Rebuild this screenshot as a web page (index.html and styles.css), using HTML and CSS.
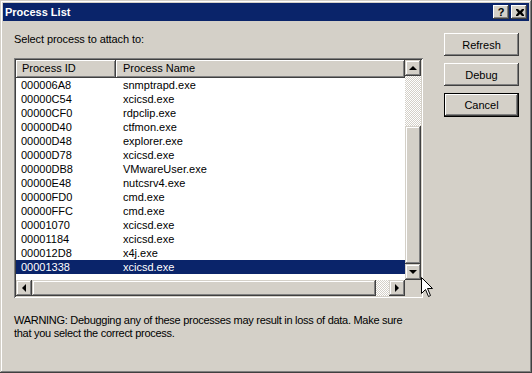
FILE: index.html
```html
<!DOCTYPE html>
<html lang="en">
<head>
  <meta charset="UTF-8" />
  <title>Process List</title>
  <link rel="stylesheet" href="styles.css">
</head>
<body>
  <div class="window">
    <div class="titlebar">
      <span class="title">Process List</span>
      <div class="title-btns">
        <button class="tbtn help">?</button>
        <button class="tbtn close">
          <svg width="8" height="7" viewBox="0 0 8 7">
            <path d="M0 0h2l2 2 2-2h2v1l-2 2.5 2 2.5v1h-2l-2-2-2 2h-2v-1l2-2.5-2-2.5z" fill="#000"/>
          </svg>
        </button>
      </div>
    </div>

    <div class="client">
      <div class="main">
        <div class="prompt">Select process to attach to:</div>

        <div class="listview">
          <div class="lv-content">
            <div class="lv-header">
              <div class="col-head col-id">Process ID</div>
              <div class="col-head col-name">Process Name</div>
            </div>
            <div class="lv-rows" id="rows"></div>
          </div>
          <div class="vscroll">
            <div class="sbtn"><span class="arrow up"></span></div>
            <div class="track" style="height: 50px"></div>
            <div class="thumb" style="height: 138px"></div>
            <div class="sbtn"><span class="arrow down"></span></div>
          </div>
          <div class="hscroll">
            <div class="sbtn"><span class="arrow left"></span></div>
            <div class="thumb" style="width: 344px"></div>
            <div class="track"></div>
            <div class="sbtn"><span class="arrow right"></span></div>
          </div>
          <div class="corner"></div>
        </div>

        <p class="warning">WARNING: Debugging any of these processes may result in loss of data. Make sure<br>that you select the correct process.</p>
      </div>

      <div class="buttons">
        <button class="btn">Refresh</button>
        <button class="btn">Debug</button>
        <button class="btn default">Cancel</button>
      </div>
    </div>

    <svg class="cursor" width="13" height="21" viewBox="0 0 13 21">
      <path d="M0.5 0.5V16.5L4.5 12.5L7.5 19.5L9.5 18.5L6.5 11.5H11.5Z" fill="#fff" stroke="#000" stroke-width="1"/>
    </svg>
  </div>

  <script>
    const processes = [
      ["000006A8", "snmptrapd.exe"],
      ["00000C54", "xcicsd.exe"],
      ["00000CF0", "rdpclip.exe"],
      ["00000D40", "ctfmon.exe"],
      ["00000D48", "explorer.exe"],
      ["00000D78", "xcicsd.exe"],
      ["00000DB8", "VMwareUser.exe"],
      ["00000E48", "nutcsrv4.exe"],
      ["00000FD0", "cmd.exe"],
      ["00000FFC", "cmd.exe"],
      ["00001070", "xcicsd.exe"],
      ["00001184", "xcicsd.exe"],
      ["000012D8", "x4j.exe"],
      ["00001338", "xcicsd.exe"]
    ];

    const rows = document.getElementById('rows');
    processes.forEach(([id, name], i) => {
      const row = document.createElement('div');
      row.className = i === processes.length - 1 ? 'lv-row selected' : 'lv-row';

      const idCell = document.createElement('div');
      idCell.className = 'cell col-id';
      idCell.innerText = id;

      const nameCell = document.createElement('div');
      nameCell.className = 'cell col-name';
      nameCell.innerText = name;

      row.appendChild(idCell);
      row.appendChild(nameCell);
      rows.appendChild(row);
    });
  </script>
</body>
</html>
```

FILE: styles.css
```css
* {
  box-sizing: border-box;
  margin: 0;
  padding: 0;
}
body {
  font-family: 'Liberation Sans', Arial, sans-serif;
  font-size: 11px;
  background: #d4d0c8;
  color: #000;
}
.window {
  position: relative;
  width: 532px;
  height: 373px;
  padding: 3px;
  background: #d4d0c8;
  box-shadow: inset -1px -1px #404040, inset 1px 1px #d4d0c8,
              inset -2px -2px #808080, inset 2px 2px #fff;
  display: flex;
  flex-direction: column;
}
.titlebar {
  height: 18px;
  background: #0a246a;
  display: flex;
  align-items: center;
  justify-content: space-between;
  padding: 0 2px 0 2px;
}
.title {
  color: #fff;
  font-weight: bold;
  font-size: 11px;
  line-height: 18px;
}
.title-btns {
  display: flex;
  gap: 2px;
}
.tbtn {
  width: 16px;
  height: 14px;
  border: none;
  background: #d4d0c8;
  font-family: 'Liberation Sans', Arial, sans-serif;
  font-weight: bold;
  font-size: 11px;
  line-height: 12px;
  display: flex;
  align-items: center;
  justify-content: center;
  box-shadow: inset -1px -1px #404040, inset 1px 1px #fff,
              inset -2px -2px #808080, inset 2px 2px #d4d0c8;
}
.tbtn.close svg {
  display: block;
  margin-left: 1px;
}

.client {
  flex: 1;
  display: flex;
  padding: 12px 0 0 11px;
}
.main {
  width: 409px;
}
.prompt {
  line-height: 13px;
  height: 13px;
  margin-bottom: 12px;
  letter-spacing: -0.1px;
}

/* list view */
.listview {
  width: 409px;
  height: 240px;
  padding: 2px;
  background: #fff;
  box-shadow: inset 1px 1px #808080, inset -1px -1px #fff,
              inset 2px 2px #404040, inset -2px -2px #d4d0c8;
  display: grid;
  grid-template-columns: 389px 16px;
  grid-template-rows: 220px 16px;
}
.lv-content {
  overflow: hidden;
  background: #fff;
}
.lv-header {
  display: flex;
  height: 18px;
}
.col-head {
  height: 18px;
  line-height: 17px;
  padding-left: 6px;
  background: #d4d0c8;
  box-shadow: inset -1px -1px #404040, inset 1px 1px #fff,
              inset -2px -2px #808080;
}
.col-id {
  width: 100px;
  flex: none;
}
.col-name {
  flex: 1;
}
.lv-header .col-name {
  padding-left: 7px;
}
.lv-row {
  display: flex;
  height: 14px;
  line-height: 14px;
}
.lv-row .col-id {
  padding-left: 5px;
}
.lv-row .col-name {
  padding-left: 7px;
}
.lv-row.selected {
  background: #0a246a;
  color: #fff;
}

/* scroll bars */
.vscroll {
  display: flex;
  flex-direction: column;
}
.hscroll {
  display: flex;
}
.sbtn, .thumb {
  width: 16px;
  height: 16px;
  flex: none;
  background: #d4d0c8;
  box-shadow: inset -1px -1px #404040, inset 1px 1px #d4d0c8,
              inset -2px -2px #808080, inset 2px 2px #fff;
  display: flex;
  align-items: center;
  justify-content: center;
}
.vscroll .thumb {
  height: auto;
}
.hscroll .thumb {
  height: 16px;
}
.track {
  flex: 1;
  background: repeating-conic-gradient(#fff 0 25%, #d4d0c8 0 50%) 0 0 / 2px 2px;
}
.vscroll .track {
  flex: none;
}
.corner {
  background: #d4d0c8;
}
.arrow {
  width: 0;
  height: 0;
  border: 4px solid transparent;
}
.arrow.up {
  border-bottom-color: #000;
  border-top-width: 0;
  margin-top: -1px;
}
.arrow.down {
  border-top-color: #000;
  border-bottom-width: 0;
}
.arrow.left {
  border-right-color: #000;
  border-left-width: 0;
  margin-left: -1px;
}
.arrow.right {
  border-left-color: #000;
  border-right-width: 0;
}

.warning {
  margin-top: 16px;
  line-height: 13px;
  white-space: nowrap;
  letter-spacing: -0.28px;
}

/* buttons */
.buttons {
  margin-left: 21px;
  display: flex;
  flex-direction: column;
  gap: 7px;
}
.btn {
  width: 75px;
  height: 23px;
  border: none;
  background: #d4d0c8;
  font-family: 'Liberation Sans', Arial, sans-serif;
  font-size: 11px;
  color: #000;
  box-shadow: inset -1px -1px #404040, inset 1px 1px #fff,
              inset -2px -2px #808080, inset 2px 2px #d4d0c8;
}
.btn.default {
  height: 24px;
  box-shadow: inset 0 0 0 1px #000, inset -2px -2px #404040, inset 2px 2px #fff,
              inset -3px -3px #808080;
}

.cursor {
  position: absolute;
  left: 421px;
  top: 277px;
}
```
